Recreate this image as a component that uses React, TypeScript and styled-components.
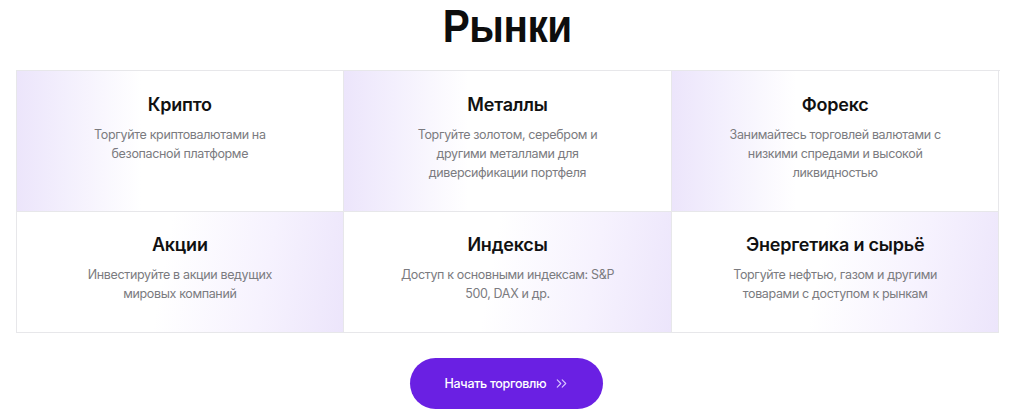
import React from 'react';
import styled, { createGlobalStyle } from 'styled-components';
import { ChevronsRight } from 'lucide-react';

const GlobalStyle = createGlobalStyle`
  body {
    margin: 0;
    background: #ffffff;
    font-family: Inter, 'Noto Sans', sans-serif;
  }
`;

type Market = {
  title: string;
  text: string;
};

const markets: Market[] = [
  { title: 'Крипто', text: 'Торгуйте криптовалютами на безопасной платформе' },
  { title: 'Металлы', text: 'Торгуйте золотом, серебром и другими металлами для диверсификации портфеля' },
  { title: 'Форекс', text: 'Занимайтесь торговлей валютами с низкими спредами и высокой ликвидностью' },
  { title: 'Акции', text: 'Инвестируйте в акции ведущих мировых компаний' },
  { title: 'Индексы', text: 'Доступ к основными индексам: S&P 500, DAX и др.' },
  { title: 'Энергетика и сырьё', text: 'Торгуйте нефтью, газом и другими товарами с доступом к рынкам' },
];

const Section = styled.section`
  display: flex;
  flex-direction: column;
  align-items: center;
  padding: 0 25px 0 16px;
`;

const Heading = styled.h1`
  margin: 0 0 0 -1px;
  height: 70px;
  line-height: 52px;
  font-family: 'Liberation Sans', Arial, sans-serif;
  font-size: 46px;
  font-weight: 700;
  letter-spacing: -0.5px;
  color: #0d0d0d;
  transform: scaleX(0.88);
`;

const Grid = styled.div`
  width: 100%;
  display: grid;
  grid-template-columns: repeat(3, 1fr);
  border-top: 1px solid #e7e7ea;
  border-left: 1px solid #e7e7ea;
`;

const Card = styled.div<{ $bottom?: boolean }>`
  display: flex;
  flex-direction: column;
  align-items: center;
  text-align: center;
  padding: ${(p) => (p.$bottom ? '21px 20px 29px' : '22px 20px 29px')};
  border-right: 1px solid #e7e7ea;
  border-bottom: 1px solid #e7e7ea;
  background: ${(p) =>
    p.$bottom
      ? 'linear-gradient(100deg, #ffffff 45%, #f6f2fe 75%, #ece5fb 100%)'
      : 'linear-gradient(90deg, #ece5fb 0%, #f3effd 15%, #ffffff 38%)'};
`;

const Title = styled.h3`
  margin: 0 0 8px;
  font-size: 18px;
  line-height: 24px;
  font-weight: 600;
  letter-spacing: -0.2px;
  color: #111111;
`;

const Text = styled.p`
  margin: 0;
  max-width: 224px;
  font-size: 12.5px;
  line-height: 19px;
  letter-spacing: -0.35px;
  color: #7b7b80;
`;

const Button = styled.button`
  margin: 25px 2px 0 0;
  width: 193px;
  height: 51px;
  border: none;
  border-radius: 26px;
  background: #6a20e3;
  color: #ffffff;
  display: flex;
  align-items: center;
  justify-content: center;
  gap: 7px;
  padding-left: 8px;
  font-family: Inter, 'Noto Sans', sans-serif;
  font-size: 12.5px;
  font-weight: 500;
  letter-spacing: -0.3px;
  cursor: pointer;

  svg {
    color: #d8c6ff;
  }
`;

export default function App() {
  return (
    <>
      <GlobalStyle />
      <Section>
        <Heading>Рынки</Heading>
        <Grid>
          {markets.map((m, i) => (
            <Card key={m.title} $bottom={i > 2}>
              <Title>{m.title}</Title>
              <Text>{m.text}</Text>
            </Card>
          ))}
        </Grid>
        <Button>
          Начать торговлю
          <ChevronsRight size={17} strokeWidth={1.6} />
        </Button>
      </Section>
    </>
  );
}
